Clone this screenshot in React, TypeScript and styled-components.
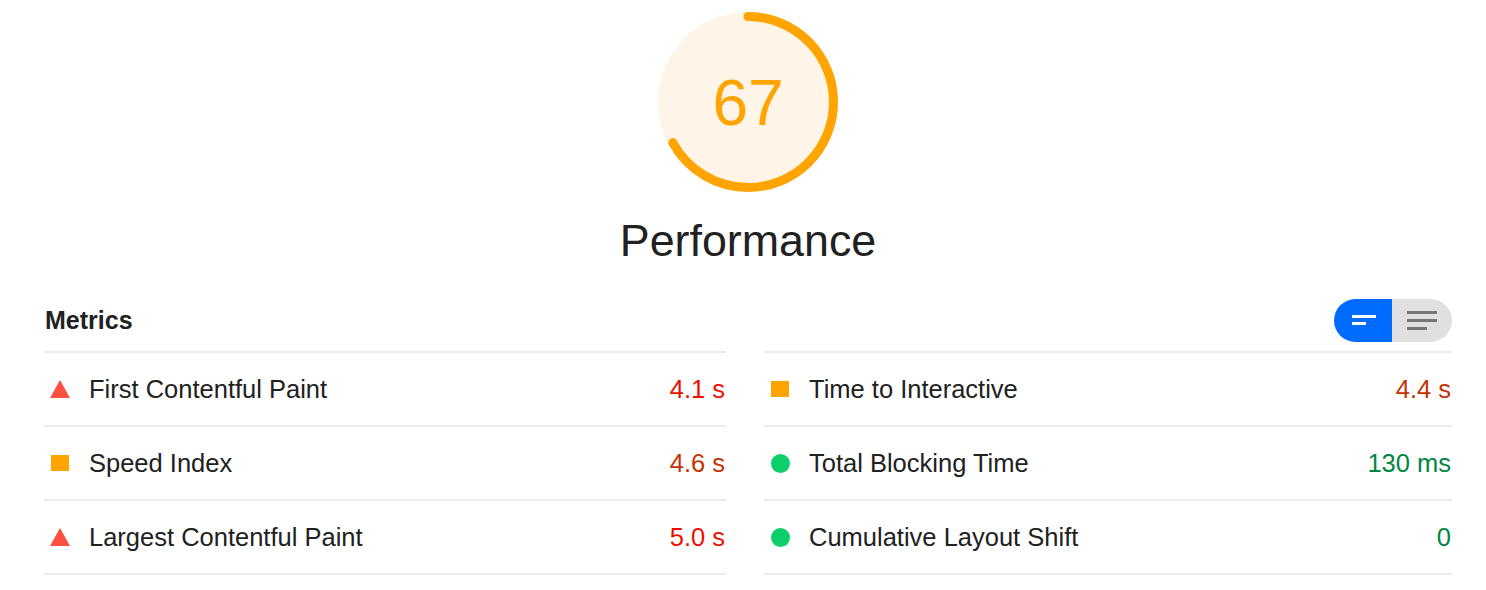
import React from "react";
import styled, { createGlobalStyle } from "styled-components";

type Rating = "fail" | "average" | "pass";

interface IMetric {
  label: string;
  value: string;
  rating: Rating;
}

const leftMetrics: IMetric[] = [
  { label: "First Contentful Paint", value: "4.1 s", rating: "fail" },
  { label: "Speed Index", value: "4.6 s", rating: "average" },
  { label: "Largest Contentful Paint", value: "5.0 s", rating: "fail" },
];

const rightMetrics: IMetric[] = [
  { label: "Time to Interactive", value: "4.4 s", rating: "average" },
  { label: "Total Blocking Time", value: "130 ms", rating: "pass" },
  { label: "Cumulative Layout Shift", value: "0", rating: "pass" },
];

const valueColors: Record<Rating, string> = {
  fail: "#eb0f00",
  average: "#c33300",
  pass: "#018642",
};

const SCORE = 67;
const R = 85.5;
const CIRC = 2 * Math.PI * R;

function RatingIcon({ rating }: { rating: Rating }) {
  if (rating === "fail") {
    return (
      <IconBox>
        <svg width="20" height="18" viewBox="0 0 20 18">
          <polygon points="10,0 20,18 0,18" fill="#ff4e42" />
        </svg>
      </IconBox>
    );
  }
  if (rating === "average") {
    return (
      <IconBox>
        <Square />
      </IconBox>
    );
  }
  return (
    <IconBox>
      <Dot />
    </IconBox>
  );
}

function MetricColumn({ metrics }: { metrics: IMetric[] }) {
  return (
    <Column>
      {metrics.map((m) => (
        <Row key={m.label}>
          <RatingIcon rating={m.rating} />
          <Label>{m.label}</Label>
          <Value $rating={m.rating}>{m.value}</Value>
        </Row>
      ))}
    </Column>
  );
}

export default function App() {
  return (
    <>
      <GlobalStyle />
      <Page>
        <GaugeWrapper>
          <svg width="182" height="182" viewBox="0 0 182 182">
            <circle cx="91" cy="91" r="90" fill="#fff4e8" />
            <circle
              cx="91"
              cy="91"
              r={R}
              fill="none"
              stroke="#ffa400"
              strokeWidth="9"
              strokeLinecap="round"
              strokeDasharray={`${(CIRC * SCORE) / 100} ${CIRC}`}
              transform="rotate(-90 91 91)"
            />
          </svg>
          <Score>{SCORE}</Score>
        </GaugeWrapper>
        <Title>Performance</Title>

        <Header>
          <HeaderTitle>Metrics</HeaderTitle>
          <Toggle>
            <ToggleButton $active>
              <svg width="26" height="12" viewBox="0 0 26 12">
                <rect x="0" y="1" width="24" height="3" fill="#fff" />
                <rect x="0" y="8" width="14" height="3" fill="#fff" />
              </svg>
            </ToggleButton>
            <ToggleButton>
              <svg width="30" height="20" viewBox="0 0 30 20">
                <rect x="0" y="1" width="30" height="3" fill="#757575" />
                <rect x="0" y="9" width="30" height="3" fill="#757575" />
                <rect x="0" y="17" width="20" height="3" fill="#757575" />
              </svg>
            </ToggleButton>
          </Toggle>
        </Header>

        <Grid>
          <MetricColumn metrics={leftMetrics} />
          <MetricColumn metrics={rightMetrics} />
        </Grid>
      </Page>
    </>
  );
}

const GlobalStyle = createGlobalStyle`
  body {
    margin: 0;
    background: #fff;
    font-family: "Liberation Sans", Arial, Helvetica, sans-serif;
    color: #212121;
  }
`;

const Page = styled.div`
  width: 1408px;
  margin-left: 44px;
  display: flex;
  flex-direction: column;
  align-items: center;
`;

const GaugeWrapper = styled.div`
  margin-top: 11px;
  display: grid;
  place-items: center;

  > * {
    grid-area: 1 / 1;
  }
`;

const Score = styled.div`
  font-size: 64px;
  line-height: 1;
  color: #ffa400;
  margin-top: 2px;
`;

const Title = styled.div`
  margin-top: 21px;
  font-size: 44.8px;
  line-height: 52px;
  color: #212121;
`;

const Header = styled.div`
  align-self: stretch;
  margin-top: 32px;
  height: 44px;
  display: flex;
  align-items: center;
  justify-content: space-between;
`;

const HeaderTitle = styled.div`
  font-size: 25px;
  font-weight: 700;
  margin-left: 1px;
`;

const Toggle = styled.div`
  display: flex;
  height: 43px;
  border-radius: 22px;
  overflow: hidden;
  margin-right: 0;
`;

const ToggleButton = styled.div<{ $active?: boolean }>`
  width: ${(p) => (p.$active ? 58 : 60)}px;
  display: flex;
  align-items: center;
  justify-content: center;
  background: ${(p) => (p.$active ? "#006bff" : "#e0e0e0")};
  padding-left: ${(p) => (p.$active ? 4 : 0)}px;
  box-sizing: border-box;
`;

const Grid = styled.div`
  align-self: stretch;
  margin-top: 9px;
  display: grid;
  grid-template-columns: 682px 1fr;
  column-gap: 38px;
`;

const Column = styled.div`
  border-top: 2px solid #ebebeb;
`;

const Row = styled.div`
  height: 72px;
  border-bottom: 2px solid #ebebeb;
  display: flex;
  align-items: center;
  padding-left: 6px;
  font-size: 25.5px;
`;

const IconBox = styled.div`
  width: 20px;
  height: 20px;
  margin-right: 19px;
  display: flex;
  align-items: center;
  justify-content: center;
`;

const Square = styled.div`
  width: 18px;
  height: 16px;
  background: #ffa400;
`;

const Dot = styled.div`
  width: 19px;
  height: 19px;
  border-radius: 50%;
  background: #0cce6b;
`;

const Label = styled.div`
  flex: 1;
  color: #212121;
`;

const Value = styled.div<{ $rating: Rating }>`
  color: ${(p) => valueColors[p.$rating]};
  margin-right: 1px;
`;
